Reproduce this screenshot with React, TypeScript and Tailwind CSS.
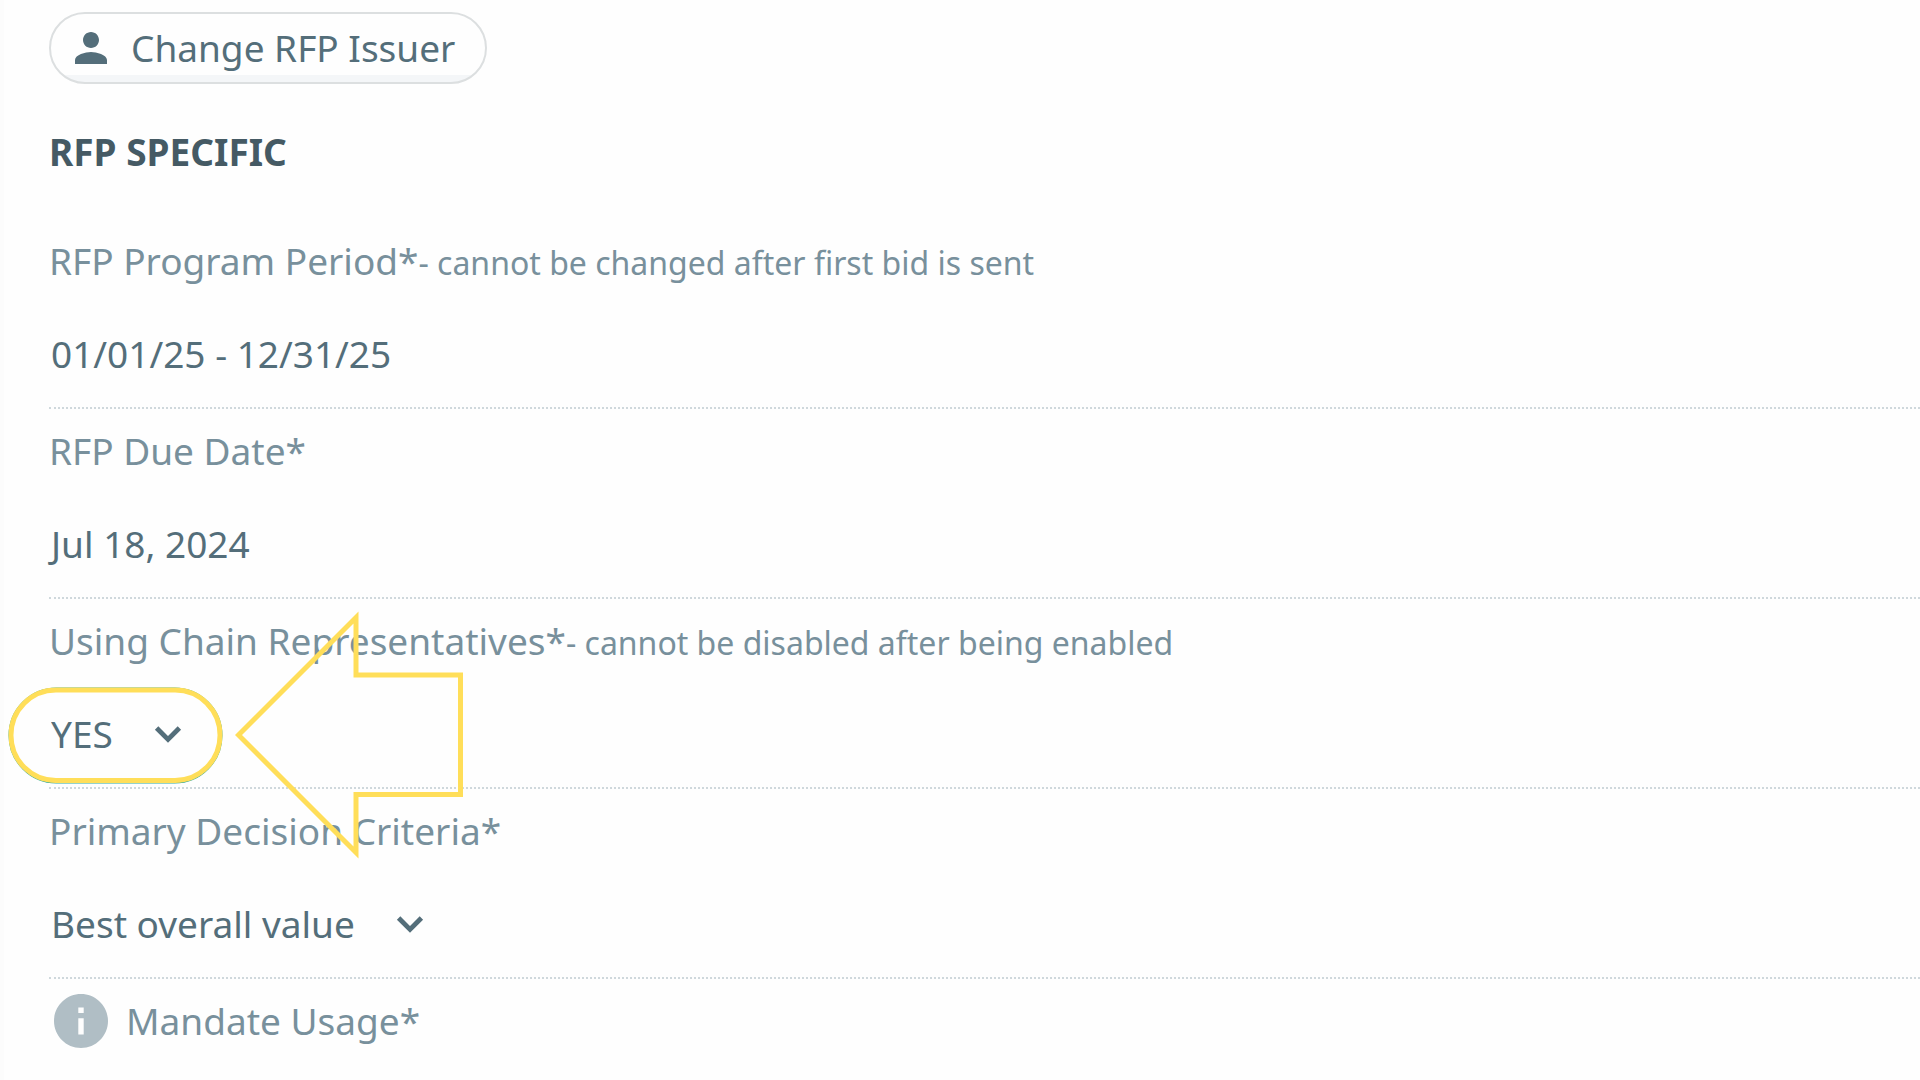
import React from 'react';

interface FieldProps {
  id: string;
  label: string;
  note?: string;
  children: React.ReactNode;
}

const Field: React.FC<FieldProps> = ({ id, label, note, children }) => (
  <div className="border-b-2 border-dotted border-[#cfd8dc] pt-3.5">
    <label
      htmlFor={id}
      className="block h-14 text-[37px] leading-[56px] text-[#78909c]"
    >
      {label}
      {note && <span className="text-[32px]">- {note}</span>}
    </label>
    <div className="flex h-[118px] items-center pt-3">{children}</div>
  </div>
);

interface TextFieldProps {
  id: string;
  value: string;
}

// The indent sits inside the input so the hook of a leading "J" is not clipped
const TextField: React.FC<TextFieldProps> = ({ id, value }) => (
  <input
    id={id}
    type="text"
    defaultValue={value}
    className="-ml-1 w-full bg-transparent indent-1.5 leading-[56px] outline-none"
  />
);

interface SelectFieldProps {
  id: string;
  options: string[];
}

const SelectField: React.FC<SelectFieldProps> = ({ id, options }) => (
  <div className="relative flex items-center">
    <select
      id={id}
      className="cursor-pointer appearance-none bg-transparent pr-[76px] pl-0.5 text-[37px] leading-[56px] text-[#546e7a] outline-none"
    >
      {options.map((option) => (
        <option key={option}>{option}</option>
      ))}
    </select>
    <svg
      viewBox="0 0 26 16"
      className="pointer-events-none absolute right-2 h-4 w-[26px] overflow-visible"
      aria-hidden="true"
    >
      <path
        d="M1.6 2 L13 13.4 L24.4 2"
        fill="none"
        stroke="#546e7a"
        strokeWidth="4.8"
      />
    </svg>
  </div>
);

// Yellow outline and arrow pointing at the select
const Callout: React.FC = () => (
  <>
    <svg
      viewBox="0 0 215 97"
      className="pointer-events-none absolute -top-[19px] -left-[41px] h-[97px] w-[215px] max-w-none"
      fill="none"
      aria-hidden="true"
    >
      <rect
        x="1.5"
        y="1.5"
        width="212"
        height="94"
        rx="47"
        stroke="#26a69a"
        strokeWidth="2"
      />
      <rect
        x="3"
        y="3"
        width="209"
        height="90.5"
        rx="45"
        stroke="#ffde59"
        strokeWidth="5"
      />
    </svg>
    <svg
      viewBox="0 0 228 248"
      className="pointer-events-none absolute -top-[95px] left-[186px] h-[248px] w-[228px] max-w-none"
      fill="none"
      aria-hidden="true"
    >
      <path
        d="M3.5 124 L121 6.5 V64 H225.5 V183.5 H121 V241.5 Z"
        stroke="#ffde59"
        strokeWidth="5"
      />
    </svg>
  </>
);

const App: React.FC = () => (
  <main className="min-h-screen overflow-hidden border-l-4 border-[#fcfcfc] bg-[#fefefe] pt-3 pl-[45px] font-['Noto_Sans',sans-serif] text-[37px] text-[#546e7a]">
    <button
      type="button"
      className="flex h-[72px] cursor-pointer items-center gap-6 rounded-full border-2 border-[#dcdfe0] bg-[linear-gradient(to_top,#f4f6f8_7px,#fefefe_7px)] pr-[30px] pl-6 leading-[56px]"
    >
      <svg
        viewBox="4 4 16 16"
        className="h-8 w-8 fill-[#546e7a]"
        aria-hidden="true"
      >
        <path d="M12 12c2.21 0 4-1.79 4-4s-1.79-4-4-4-4 1.79-4 4 1.79 4 4 4zm0 2c-2.67 0-8 1.34-8 4v2h16v-2c0-2.66-5.33-4-8-4z" />
      </svg>
      Change RFP Issuer
    </button>

    <h2 className="mt-10 mb-[39px] leading-[56px] font-bold text-[#455a64]">
      RFP SPECIFIC
    </h2>

    <form>
      <Field
        id="period"
        label="RFP Program Period*"
        note="cannot be changed after first bid is sent"
      >
        <TextField id="period" value="01/01/25 - 12/31/25" />
      </Field>
      <Field id="due-date" label="RFP Due Date*">
        <TextField id="due-date" value="Jul 18, 2024" />
      </Field>
      <Field
        id="chain-reps"
        label="Using Chain Representatives*"
        note="cannot be disabled after being enabled"
      >
        <div className="relative">
          <SelectField id="chain-reps" options={['YES']} />
          <Callout />
        </div>
      </Field>
      <Field id="criteria" label="Primary Decision Criteria*">
        <SelectField id="criteria" options={['Best overall value']} />
      </Field>
      <div className="flex items-center gap-[18px] pt-3.5 pl-[5px] leading-[56px] text-[#78909c]">
        <svg viewBox="2 2 20 20" className="size-[54px]" aria-hidden="true">
          <path
            fill="#b0bec5"
            d="M12 2C6.48 2 2 6.48 2 12s4.48 10 10 10 10-4.48 10-10S17.52 2 12 2zm1 15h-2v-6h2v6zm0-8h-2V7h2v2z"
          />
        </svg>
        <span>Mandate Usage*</span>
      </div>
    </form>
  </main>
);

export default App;
